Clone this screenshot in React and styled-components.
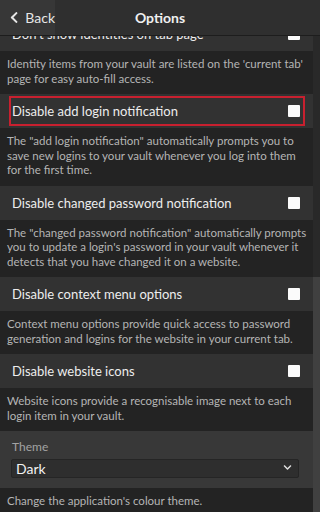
import React, { useLayoutEffect, useRef } from "react";
import styled, { createGlobalStyle } from "styled-components";
import { FaChevronLeft, FaChevronDown } from "react-icons/fa";

const GlobalStyle = createGlobalStyle`
  html, body {
    margin: 0;
    padding: 0;
    background: #232323;
    font-family: Lato, "Open Sans", "Liberation Sans", sans-serif;
  }
  * { box-sizing: border-box; }
`;

const options = [
  {
    type: "check",
    title: "Enable auto-fill on page load",
    desc: "If a login form is detected, automatically perform an auto-fill when the web page loads.",
  },
  {
    type: "check",
    title: "Disable auto TOTP copy",
    desc: "If your login has an authenticator key attached to it, the TOTP verification code is automatically copied to your clipboard whenever you auto-fill the login.",
  },
  {
    type: "select",
    title: "Clear clipboard",
    value: "Never",
    desc: "Automatically clear copied values from your clipboard.",
  },
  {
    type: "select",
    title: "Default URI match detection",
    value: "Base domain",
    desc: "Choose the default way that URI match detection is handled for logins when performing actions such as auto-fill.",
  },
  {
    type: "check",
    title: "Don't show cards on tab page",
    desc: "Card items from your vault are listed on the 'current tab' page for easy auto-fill access.",
  },
  {
    type: "check",
    title: "Don't show identities on tab page",
    desc: "Identity items from your vault are listed on the 'current tab' page for easy auto-fill access.",
  },
  {
    type: "check",
    title: "Disable add login notification",
    focused: true,
    desc: "The \"add login notification\" automatically prompts you to save new logins to your vault whenever you log into them for the first time.",
  },
  {
    type: "check",
    title: "Disable changed password notification",
    desc: "The \"changed password notification\" automatically prompts you to update a login's password in your vault whenever it detects that you have changed it on a website.",
  },
  {
    type: "check",
    title: "Disable context menu options",
    desc: "Context menu options provide quick access to password generation and logins for the website in your current tab.",
  },
  {
    type: "check",
    title: "Disable website icons",
    desc: "Website icons provide a recognisable image next to each login item in your vault.",
  },
  {
    type: "select",
    title: "Theme",
    value: "Dark",
    desc: "Change the application's colour theme.",
  },
];

const App = () => {
  const scrollRef = useRef(null);

  // list is scrolled down near its end
  useLayoutEffect(() => {
    const el = scrollRef.current;
    if (el) el.scrollTop = el.scrollHeight - el.clientHeight - 5;
  }, []);

  return (
    <Page>
      <GlobalStyle />
      <Header>
        <BackButton type="button">
          <FaChevronLeft size={13} />
          Back
        </BackButton>
        <Title>Options</Title>
        <HeaderSpacer />
      </Header>

      <Body>
        <Content ref={scrollRef}>
          {options.map((opt) => (
            <Box key={opt.title}>
              {opt.type === "check" ? (
                <CheckRow>
                  <CheckLabel $focused={opt.focused}>
                    <span>{opt.title}</span>
                    <CheckBox />
                  </CheckLabel>
                </CheckRow>
              ) : (
                <SelectRow>
                  <SelectLabel>{opt.title}</SelectLabel>
                  <SelectWrap>
                    <Select defaultValue={opt.value}>
                      <option>{opt.value}</option>
                    </Select>
                    <SelectArrow>
                      <FaChevronDown size={9} />
                    </SelectArrow>
                  </SelectWrap>
                </SelectRow>
              )}
              <Footer>{opt.desc}</Footer>
            </Box>
          ))}
        </Content>
        <ScrollTrack>
          <ScrollThumb />
        </ScrollTrack>
      </Body>
    </Page>
  );
};

const Page = styled.div`
  width: 320px;
  height: 512px;
  display: flex;
  flex-direction: column;
  background: #232323;
  overflow: hidden;
`;

const Header = styled.div`
  height: 36px;
  flex: none;
  display: flex;
  align-items: stretch;
  background: #2f2f2f;
  border-bottom: 1px solid #1d1d1d;
`;

const BackButton = styled.button`
  width: 55px;
  display: flex;
  align-items: center;
  gap: 5px;
  padding: 0 0 0 8px;
  border: none;
  background: #373737;
  color: #e6e6e6;
  font-family: inherit;
  font-size: 14px;
`;

const Title = styled.h1`
  flex: 1;
  margin: 0;
  display: flex;
  align-items: center;
  justify-content: center;
  font-size: 14px;
  font-weight: 700;
  color: #f0f0f0;
`;

const HeaderSpacer = styled.div`
  width: 55px;
`;

const Body = styled.div`
  flex: 1;
  min-height: 0;
  display: flex;
`;

const Content = styled.div`
  flex: 1;
  overflow-y: auto;
  scrollbar-width: none;

  &::-webkit-scrollbar {
    display: none;
  }
`;

const ScrollTrack = styled.div`
  width: 7px;
  flex: none;
  display: flex;
  flex-direction: column;
  justify-content: flex-end;
  background: #292929;
`;

const ScrollThumb = styled.div`
  height: 235px;
  background: #404040;
`;

const Box = styled.div`
  display: flex;
  flex-direction: column;
`;

const CheckRow = styled.div`
  background: #323232;
  padding: 2px 8px 2px 9px;
`;

const CheckLabel = styled.label`
  height: 30px;
  display: flex;
  align-items: center;
  justify-content: space-between;
  padding: 0 3px 0 1px;
  border: 2px solid ${(p) => (p.$focused ? "#c8202f" : "transparent")};
  color: #ededed;
  font-size: 13px;
`;

const CheckBox = styled.span`
  width: 12px;
  height: 12px;
  background: #fbfbfb;
  border-radius: 1px;
`;

const SelectRow = styled.div`
  background: #383838;
  padding: 8px 14px 10px 11px;
  display: flex;
  flex-direction: column;
  gap: 4px;
`;

const SelectLabel = styled.span`
  color: #a3a3a3;
  font-size: 12px;
  padding-left: 1px;
`;

const SelectWrap = styled.div`
  position: relative;
`;

const Select = styled.select`
  width: 100%;
  height: 19px;
  appearance: none;
  border: 1px solid #252525;
  border-radius: 2px;
  background: #2e2e2e;
  color: #f2f2f2;
  font-family: inherit;
  font-size: 14px;
  padding: 0 4px;
  outline: none;
`;

const SelectArrow = styled.span`
  position: absolute;
  right: 7px;
  top: 5px;
  color: #e0e0e0;
  display: flex;
`;

const Footer = styled.p`
  margin: 0;
  padding: 6px 1px 8px 7px;
  color: #b5b5b5;
  font-size: 11.5px;
  line-height: 14.5px;
`;

export default App;
